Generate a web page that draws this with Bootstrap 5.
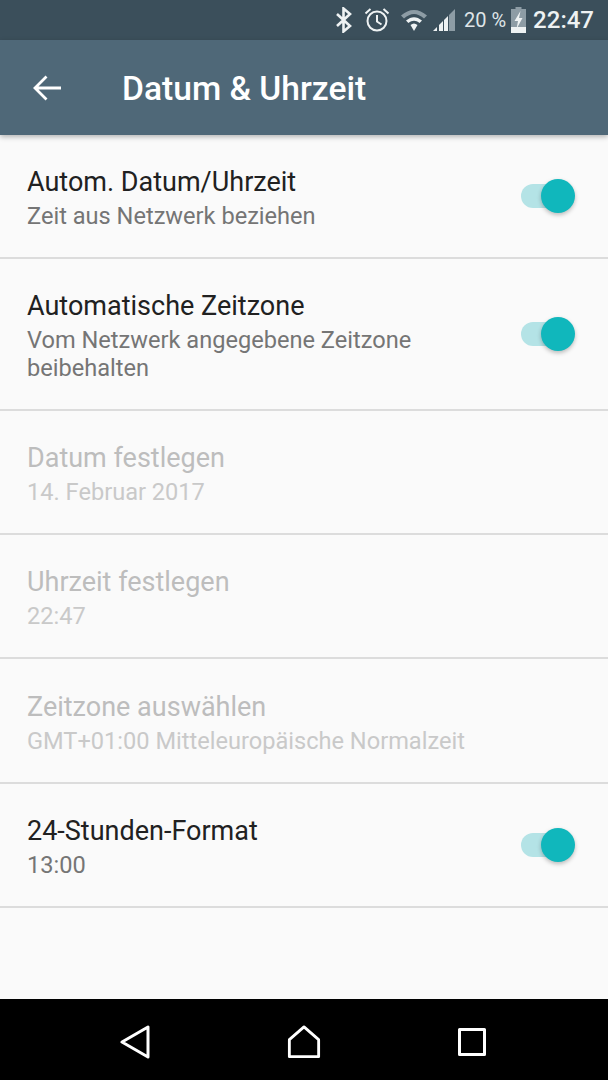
<!DOCTYPE html>
<html lang="de">
<head>
  <meta charset="UTF-8" />
  <meta name="viewport" content="width=device-width, initial-scale=1.0" />
  <title>Datum &amp; Uhrzeit</title>
  <link href="https://cdn.jsdelivr.net/npm/bootstrap@5.3.0/dist/css/bootstrap.min.css" rel="stylesheet" />
  <style>
    body {
      background: #fafafa;
      font-family: Roboto, "Liberation Sans", sans-serif;
      height: 1080px;
      overflow: hidden;
    }
    .status-bar {
      height: 40px;
      background: #3b4f5b;
      color: #eef2f3;
      padding-right: 14px;
    }
    .status-pct { font-size: 20px; margin-left: 8px; margin-right: 5px; color: #dfe5e8; }
    .status-time { font-size: 24px; font-weight: 500; margin-left: 7px; }
    .app-bar {
      height: 95px;
      background: #4f6878;
      color: #fff;
      box-shadow: 0 2px 5px rgba(0, 0, 0, .28);
      position: relative;
      padding-left: 33px;
    }
    .app-title { font-size: 33.6px; font-weight: 500; margin: 4px 0 0 61px; }
    .pref-list { height: 864px; }
    .pref-row {
      border-bottom: 2px solid #dcdcdc;
      padding: 0 33px 0 27px;
      height: 124px;
    }
    .pref-row.tall { height: 152px; }
    .pref-row.wide { height: 125px; }
    .pref-text { padding-top: 1px; }
    .pref-title { font-size: 27px; line-height: 38px; color: #212121; }
    .pref-sub { font-size: 23.6px; line-height: 28px; color: #757575; margin-top: 1px; max-width: 470px; }
    .pref-row.off .pref-title { color: #bdbdbd; }
    .pref-row.off .pref-sub { color: #c9c9c9; }
    .switch-box { position: relative; width: 54px; height: 34px; flex: none; }
    .switch-track {
      position: absolute; left: 0; top: 5px;
      width: 46px; height: 24px; border-radius: 12px;
      background: #b4e3e6;
    }
    .switch-thumb {
      position: absolute; right: 0; top: 0;
      width: 34px; height: 34px; border-radius: 50%;
      background: #10b7bc;
      box-shadow: 0 2px 4px rgba(0, 0, 0, .25);
    }
    .nav-bar { height: 81px; background: #000; padding-top: 5px; }
  </style>
</head>
<body>
  <div class="status-bar d-flex align-items-center justify-content-end">
    <svg width="20" height="26" viewBox="0 0 20 26" fill="none" stroke="#eef2f3" stroke-width="2.6" style="margin-right:10px"><path d="M3 7l13 12-6.500 5.500V1.500L16 7 3 19" /></svg>
    <svg width="26" height="26" viewBox="0 0 26 26" fill="none" stroke="#eef2f3" stroke-width="2" style="margin-right:10px"><circle cx="13" cy="14" r="9.500" /><path d="M13 8v6.500l4.500 3M1.500 6.500L6.500 2M24.500 6.500L19.500 2" /></svg>
    <svg width="28" height="24" viewBox="0 0 28 24" style="margin-right:4px"><path d="M1 7.500C9 0 19 0 27 7.500l-3 3C17 4.500 11 4.500 4 10.500z" fill="#8d9ca5" /><path d="M6 12.500c5.500-4.500 10.500-4.500 16 0l-2.400 2.500c-4-3-7.200-3-11.200 0z" fill="#eef2f3" /><path d="M10.500 17c2.500-2 4.500-2 7 0L14 23z" fill="#eef2f3" /></svg>
    <svg width="24" height="24" viewBox="0 0 24 24"><path d="M23 1v22h-6V7z" fill="#8d9ca5" /><path d="M1 23l4-4v4zM7 23v-6l4-4v10zM12 23V12l4-4v15z" fill="#eef2f3" /></svg>
    <span class="status-pct">20 %</span>
    <svg width="15" height="26" viewBox="0 0 15 26"><path d="M4.500 0h6v2H15v24H0V2h4.500z" fill="#8d9ca5" /><path d="M0 20h15v6H0z" fill="#eef2f3" /><path d="M9.500 4L3.500 14h3.500L5.500 22 11.500 11H8z" fill="#eef2f3" /></svg>
    <span class="status-time">22:47</span>
  </div>

  <div class="app-bar d-flex align-items-center">
    <svg width="28" height="26" viewBox="0 0 28 26" fill="none" stroke="#fff" stroke-width="2.800"><path d="M28 13H2.500M13.500 1.500L2 13l11.500 11.500" /></svg>
    <h1 class="app-title">Datum &amp; Uhrzeit</h1>
  </div>

  <div class="pref-list">
    <div class="pref-row d-flex align-items-center justify-content-between">
      <div class="pref-text">
        <div class="pref-title">Autom. Datum/Uhrzeit</div>
        <div class="pref-sub">Zeit aus Netzwerk beziehen</div>
      </div>
      <div class="switch-box"><div class="switch-track"></div><div class="switch-thumb"></div></div>
    </div>
    <div class="pref-row tall d-flex align-items-center justify-content-between">
      <div class="pref-text">
        <div class="pref-title">Automatische Zeitzone</div>
        <div class="pref-sub">Vom Netzwerk angegebene Zeitzone beibehalten</div>
      </div>
      <div class="switch-box"><div class="switch-track"></div><div class="switch-thumb"></div></div>
    </div>
    <div class="pref-row off d-flex align-items-center">
      <div class="pref-text">
        <div class="pref-title">Datum festlegen</div>
        <div class="pref-sub">14. Februar 2017</div>
      </div>
    </div>
    <div class="pref-row off d-flex align-items-center">
      <div class="pref-text">
        <div class="pref-title">Uhrzeit festlegen</div>
        <div class="pref-sub">22:47</div>
      </div>
    </div>
    <div class="pref-row wide off d-flex align-items-center">
      <div class="pref-text">
        <div class="pref-title">Zeitzone auswählen</div>
        <div class="pref-sub text-nowrap">GMT+01:00 Mitteleuropäische Normalzeit</div>
      </div>
    </div>
    <div class="pref-row d-flex align-items-center justify-content-between">
      <div class="pref-text">
        <div class="pref-title">24-Stunden-Format</div>
        <div class="pref-sub">13:00</div>
      </div>
      <div class="switch-box"><div class="switch-track"></div><div class="switch-thumb"></div></div>
    </div>
  </div>

  <div class="nav-bar d-flex align-items-center justify-content-center">
    <svg width="32" height="34" viewBox="0 0 32 34" fill="none" stroke="#fff" stroke-width="3" stroke-linejoin="round" style="margin-right:135px;margin-left:-3px"><path d="M28 2v30L2 17z" /></svg>
    <svg width="34" height="34" viewBox="0 0 36 36" fill="none" stroke="#fff" stroke-width="3" stroke-linejoin="round" style="margin-right:137px"><path d="M2.500 33.500V15.500L18 2l15.500 13.500v18z" /></svg>
    <svg width="28" height="28" viewBox="0 0 28 28" fill="none" stroke="#fff" stroke-width="3" stroke-linejoin="round"><path d="M1.500 1.500h25v25h-25z" /></svg>
  </div>

  <script src="https://cdn.jsdelivr.net/npm/bootstrap@5.3.0/dist/js/bootstrap.bundle.min.js"></script>
</body>
</html>
